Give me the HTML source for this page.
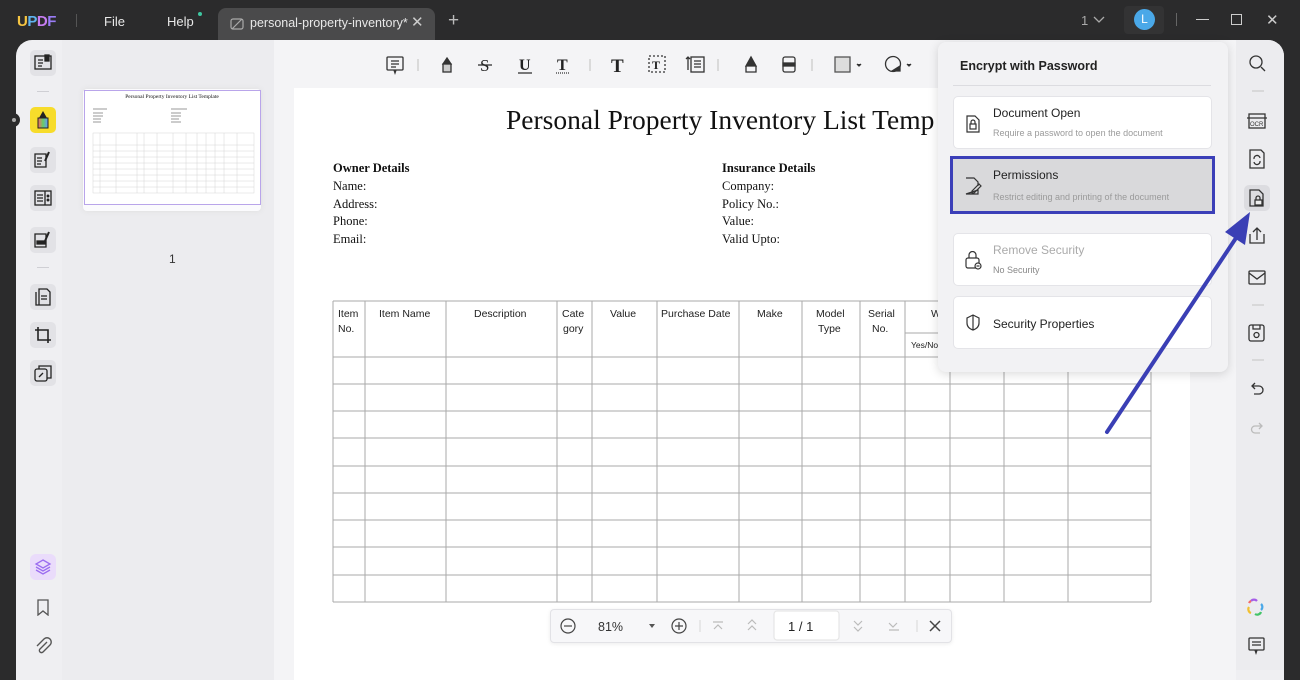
<!DOCTYPE html>
<html><head><meta charset="utf-8">
<style>
*{margin:0;padding:0;box-sizing:border-box}
body{width:1300px;height:670px;overflow:hidden;background:#2b2b2c;font-family:"Liberation Sans",sans-serif;position:relative}
.a{position:absolute}
.top{color:#e8e8e8;font-size:13px}
.ic{position:absolute;width:26px;height:26px;border-radius:5px;background:#e2e2e6}
.sep{position:absolute;width:12px;height:1px;background:#cfcfd4}
.card{position:absolute;left:953px;width:259px;background:#fff;border-radius:5px;border:1px solid #e4e4e8}
.ct{position:absolute;left:39px;font-size:12px;color:#222}
.cs{position:absolute;left:39px;font-size:9px;color:#9a9a9a}
.ser{font-family:"Liberation Serif",serif;color:#111}
</style></head><body>
<!-- title bar -->
<div class="a" style="left:17px;top:13px;font-weight:bold;font-size:15px;letter-spacing:-0.5px"><span style="color:#f5c542">U</span><span style="color:#5fb3f0">P</span><span style="color:#c77df2">D</span><span style="color:#9a7cf6">F</span></div>
<div class="a" style="left:76px;top:14px;width:1px;height:13px;background:#555"></div>
<div class="a top" style="left:104px;top:14px">File</div>
<div class="a top" style="left:167px;top:14px">Help</div>
<div class="a" style="left:198px;top:12px;width:4px;height:4px;border-radius:50%;background:#3ec6a0"></div>
<div class="a" style="left:218px;top:8px;width:217px;height:34px;background:#4a4a4b;border-radius:8px 8px 0 0"></div>
<svg class="a" style="left:229px;top:16px" width="16" height="16" viewBox="0 0 16 16" fill="none" stroke="#aaa" stroke-width="1.2"><rect x="2" y="3" width="12" height="10" rx="2"/><path d="M3 13 L13 3"/></svg>
<div class="a top" style="left:250px;top:16px;font-size:12.5px">personal-property-inventory*</div>
<div class="a top" style="left:411px;top:13px;font-size:15px;color:#ccc">✕</div>
<div class="a top" style="left:448px;top:10px;font-size:19px;color:#bbb">+</div>
<div class="a top" style="left:1081px;top:13px;color:#aaa">1</div>
<svg class="a" style="left:1093px;top:15px" width="12" height="10"><path d="M1 2 L6 7 L11 2" stroke="#aaa" fill="none" stroke-width="1.3"/></svg>
<div class="a" style="left:1124px;top:6px;width:40px;height:28px;background:#333334;border-radius:4px"></div>
<div class="a" style="left:1134px;top:9px;width:21px;height:21px;border-radius:50%;background:#4aa8e8;color:#fff;font-size:12px;text-align:center;line-height:21px">L</div>
<div class="a" style="left:1176px;top:13px;width:1px;height:13px;background:#666"></div>
<div class="a" style="left:1196px;top:19px;width:13px;height:1px;background:#ccc"></div>
<div class="a" style="left:1231px;top:14px;width:11px;height:11px;border:1.2px solid #ccc"></div>
<div class="a top" style="left:1266px;top:11px;font-size:15px;color:#ccc">✕</div>

<!-- main -->
<div class="a" style="left:16px;top:40px;width:1268px;height:640px;background:#efeff2;border-radius:16px 16px 0 0;overflow:hidden">
  <div class="a" style="left:46px;top:0;width:212px;height:640px;background:#ececef"></div>
  <div class="a" style="left:258px;top:0;width:962px;height:640px;background:#f4f4f6"></div>
  <div class="a" style="left:278px;top:48px;width:896px;height:600px;background:#fff"></div>
</div>
<div class="a" style="left:8px;top:113px;width:12px;height:14px;background:#2b2b2c;border-radius:0 8px 8px 0"></div>
<div class="a" style="left:12px;top:118px;width:4px;height:4px;border-radius:50%;background:#aaa"></div>

<!-- left icons -->
<div class="ic" style="left:30px;top:50px"></div>
<svg class="a" style="left:34px;top:54px" width="18" height="18" fill="none" stroke="#222" stroke-width="1.3"><rect x="1" y="2" width="16" height="13"/><path d="M4 6h5M4 9h5M4 12h4"/><rect x="11" y="1" width="4" height="6" fill="#222"/></svg>
<div class="sep" style="left:37px;top:91px"></div>
<div class="ic" style="left:30px;top:107px;background:#f7dc2b"></div>
<svg class="a" style="left:33px;top:109px" width="20" height="22"><path d="M10 2 L14 9 L6 9 Z" fill="#222"/><rect x="5" y="9" width="10" height="10" fill="url(#rb)" stroke="#222"/><defs><linearGradient id="rb" x1="0" x2="1"><stop offset="0" stop-color="#f66"/><stop offset=".5" stop-color="#6c6"/><stop offset="1" stop-color="#69f"/></linearGradient></defs></svg>
<div class="ic" style="left:30px;top:147px"></div>
<svg class="a" style="left:34px;top:151px" width="18" height="18" fill="none" stroke="#222" stroke-width="1.3"><path d="M1 3h11v13H1z"/><path d="M3 7h5M3 10h5M3 13h4"/><path d="M15 1 L11 10" stroke-width="2"/></svg>
<div class="ic" style="left:30px;top:185px"></div>
<svg class="a" style="left:34px;top:189px" width="18" height="18" fill="none" stroke="#222" stroke-width="1.3"><rect x="1" y="2" width="16" height="14"/><path d="M11 2v14M3 6h6M3 9h6M3 12h6"/><circle cx="14" cy="7" r=".8" fill="#222"/><circle cx="14" cy="11" r=".8" fill="#222"/></svg>
<div class="ic" style="left:30px;top:227px"></div>
<svg class="a" style="left:34px;top:231px" width="18" height="18" fill="none" stroke="#222" stroke-width="1.3"><path d="M1 3h11v13H1z"/><rect x="3" y="10" width="8" height="3" fill="#222"/><path d="M15 1 L11 10" stroke-width="2"/></svg>
<div class="sep" style="left:37px;top:267px"></div>
<div class="ic" style="left:30px;top:284px"></div>
<svg class="a" style="left:34px;top:288px" width="18" height="18" fill="none" stroke="#222" stroke-width="1.3"><path d="M5 1h8l3 3v13H5z M2 4v13h10"/><path d="M7 8h6M7 11h6"/></svg>
<div class="ic" style="left:30px;top:322px"></div>
<svg class="a" style="left:34px;top:326px" width="18" height="18" fill="none" stroke="#222" stroke-width="1.6"><path d="M4 1v13h13M1 4h13v13"/></svg>
<div class="ic" style="left:30px;top:360px"></div>
<svg class="a" style="left:34px;top:364px" width="18" height="18" fill="none" stroke="#222" stroke-width="1.3"><rect x="1" y="5" width="12" height="12" rx="2"/><path d="M5 5V2h12v12h-4"/><path d="M5 13l4-4"/></svg>
<div class="a" style="left:30px;top:554px;width:26px;height:26px;border-radius:6px;background:#eadcfb"></div>
<svg class="a" style="left:34px;top:558px" width="18" height="18" fill="none" stroke="#9b6cf0" stroke-width="1.3"><path d="M9 2 L16 6 L9 10 L2 6 Z"/><path d="M2 9 L9 13 L16 9M2 12 L9 16 L16 12"/></svg>
<svg class="a" style="left:36px;top:599px" width="14" height="17" fill="none" stroke="#555" stroke-width="1.3"><path d="M2 1h10v15l-5-4-5 4z"/></svg>
<svg class="a" style="left:35px;top:637px" width="17" height="18" fill="none" stroke="#555" stroke-width="1.4"><path d="M12 5 L5 12 a2 2 0 0 0 3 3 L15 8 a4 4 0 0 0-6-6 L2 9"/></svg>

<!-- thumbnail -->
<div class="a" style="left:83px;top:89px;width:178px;height:122px;background:#fbfbfd;border-radius:4px;box-shadow:0 0 6px #ddd"></div>
<div class="a" style="left:84px;top:90px;width:177px;height:115px;background:#fff;border:1.5px solid #b9a5ea">
 <div class="a ser" style="left:0;width:174px;top:3px;text-align:center;font-size:5.5px">Personal Property Inventory List Template</div>
 <svg class="a" style="left:6px;top:14px" width="165" height="95" stroke="#ccc" stroke-width=".4" fill="none">
  <path d="M2 4h14M2 8h10M2 11h10M2 14h8M2 17h8M80 4h16M80 8h10M80 11h10M80 14h8M80 17h10" stroke="#999" stroke-width="1"/>
  <rect x="2" y="28" width="161" height="60"/>
  <path d="M2 40h161M2 46h161M2 52h161M2 58h161M2 64h161M2 70h161M2 76h161M2 82h161M9 28v60M25 28v60M46 28v60M53 28v60M66 28v60M82 28v60M95 28v60M106 28v60M115 28v60M124 28v60M133 28v60M146 28v60"/>
 </svg>
</div>
<div class="a" style="left:169px;top:252px;font-size:12px;color:#333">1</div>

<!-- toolbar -->
<svg class="a" style="left:384px;top:54px" width="540" height="22" fill="none" stroke="#333" stroke-width="1.3">
 <rect x="3" y="3" width="16" height="13" rx="1"/><path d="M7 7h8M7 10h8M7 13h5M10 16l1 3 1-3"/>
 <path d="M34 5v12" stroke="#ccc"/>
 <path d="M63 4l4 6h-8z" fill="#333"/><rect x="59" y="10" width="8" height="8" fill="#ccc"/>
 <text x="96" y="17" font-family="Liberation Serif" font-size="17" fill="#222" stroke="none">S</text><path d="M94 11h14"/>
 <text x="135" y="16" font-family="Liberation Serif" font-weight="bold" font-size="16" fill="#222" stroke="none">U</text><path d="M134 19h14"/>
 <text x="173" y="16" font-family="Liberation Serif" font-weight="bold" font-size="16" fill="#222" stroke="none">T</text><path d="M172 19h14" stroke-dasharray="1 1"/>
 <path d="M206 5v12" stroke="#ccc"/>
 <text x="227" y="18" font-family="Liberation Serif" font-weight="bold" font-size="19" fill="#222" stroke="none">T</text>
 <rect x="265" y="2" width="16" height="16" stroke-dasharray="2 2"/><text x="268" y="15" font-family="Liberation Serif" font-weight="bold" font-size="12" fill="#222" stroke="none">T</text>
 <rect x="307" y="3" width="13" height="15"/><path d="M310 7h7M310 10h7M310 13h7M304 3v13M302 5l2-2 2 2"/>
 <path d="M334 5v12" stroke="#ccc"/>
 <path d="M367 3l5 9h-10z" fill="#333"/><path d="M362 12v6h10v-6"/>
 <rect x="399" y="3" width="12" height="15" rx="2"/><rect x="399" y="9" width="12" height="3" fill="#333"/>
 <path d="M428 5v12" stroke="#ccc"/>
 <rect x="451" y="3" width="15" height="15" fill="#ddd" stroke="#555"/><path d="M473 10l2 2 2-2" fill="#333"/>
 <circle cx="509" cy="10" r="7.5"/><path d="M508 17 l8-5 v5z" fill="#333"/><path d="M523 10l2 2 2-2" fill="#333"/>
</svg>

<!-- document -->
<div class="a ser" style="left:506px;top:104px;font-size:27.5px;white-space:nowrap">Personal Property Inventory List Temp</div>
<div class="a ser" style="left:333px;top:160px;font-size:12.5px;line-height:17.8px">
 <b>Owner Details</b><br>Name:<br>Address:<br>Phone:<br>Email:</div>
<div class="a ser" style="left:722px;top:160px;font-size:12.5px;line-height:17.8px">
 <b>Insurance Details</b><br>Company:<br>Policy No.:<br>Value:<br>Valid Upto:</div>
<svg class="a" style="left:0;top:0" width="1300" height="670" font-family="Liberation Sans" font-size="10.5" fill="#222">
 <g stroke="#aaa" stroke-width="1">
  <path d="M333 301H1151M333 357H1151M333 384H1151M333 411H1151M333 438H1151M333 466H1151M333 493H1151M333 520H1151M333 547H1151M333 575H1151M333 602H1151"/>
  <path d="M333 301V602M365 301V602M446 301V602M557 301V602M592 301V602M657 301V602M739 301V602M802 301V602M860 301V602M905 301V602M950 333V602M1004 301V602M1068 301V602M1151 301V602M905 333H1004"/>
 </g>
 <text x="338" y="317">Item</text><text x="338" y="332">No.</text>
 <text x="379" y="317">Item Name</text>
 <text x="474" y="317">Description</text>
 <text x="562" y="317">Cate</text><text x="563" y="332">gory</text>
 <text x="610" y="317">Value</text>
 <text x="661" y="317">Purchase Date</text>
 <text x="757" y="317">Make</text>
 <text x="816" y="317">Model</text><text x="818" y="332">Type</text>
 <text x="868" y="317">Serial</text><text x="872" y="332">No.</text>
 <text x="931" y="317">W</text>
 <text x="911" y="348" font-size="8.5">Yes/No</text>
</svg>

<!-- zoom bar -->
<div class="a" style="left:550px;top:609px;width:402px;height:34px;background:#f7f7f9;border:1px solid #e2e2e6;border-radius:4px;box-shadow:0 1px 4px rgba(0,0,0,.08)"></div>
<svg class="a" style="left:550px;top:609px" width="402" height="34" fill="none" stroke="#444" stroke-width="1.2">
 <circle cx="18" cy="17" r="7"/><path d="M14 17h8"/>
 <text x="48" y="22" font-family="Liberation Sans" font-size="12.5" fill="#333" stroke="none">81%</text>
 <path d="M99 15l3 4 3-4z" fill="#555" stroke="none"/>
 <circle cx="129" cy="17" r="7"/><path d="M125 17h8M129 13v8"/>
 <path d="M150 11v12" stroke="#ddd"/>
 <path d="M163 13h10M164 20l4-4 4 4M198 15l4-4 4 4M198 21l4-4 4 4" stroke="#bbb"/>
 <rect x="224" y="2" width="65" height="29" rx="3" fill="#fff" stroke="#e6e6e6"/>
 <text x="238" y="22" font-family="Liberation Sans" font-size="13" fill="#222" stroke="none">1 / 1</text>
 <path d="M304 12l4 4 4-4M304 18l4 4 4-4M339 14l4 4 4-4M339 21h10" stroke="#bbb"/>
 <path d="M367 11v12" stroke="#ddd"/>
 <path d="M380 12l10 10M390 12l-10 10" stroke-width="1.5"/>
</svg>

<!-- right column -->
<div class="a" style="left:1236px;top:40px;width:48px;height:630px;background:#ececef;border-radius:0 16px 0 0"></div>
<svg class="a" style="left:1236px;top:40px" width="48" height="630" fill="none" stroke="#333" stroke-width="1.3">
 <circle cx="20" cy="22" r="6"/><path d="M25 27l4 4"/>
 <path d="M16 51h12M16 265h12M16 320h12" stroke="#ccc"/>
 <rect x="13" y="74" width="16" height="14"/><path d="M11 78h20"/><text x="14" y="86" font-size="6" font-family="Liberation Sans" fill="#333" stroke="none">OCR</text>
 <path d="M14 110h11l3 3v15H14z"/><path d="M18 119a3 3 0 0 1 6-1M24 121a3 3 0 0 1-6 1"/>
 <rect x="8" y="145" width="26" height="26" rx="5" fill="#dcdce0" stroke="none"/>
 <path d="M14 150h9l4 4v12H14z"/><rect x="19" y="160" width="7" height="5" fill="#eee"/><path d="M20 160v-2a2 2 0 0 1 4 0v2"/>
 <path d="M14 194v9h14v-9M21 188v12M17 192l4-4 4 4"/>
 <rect x="13" y="231" width="16" height="13" rx="1"/><path d="M13 233l8 6 8-6"/>
 <rect x="13" y="285" width="15" height="16" rx="2"/><circle cx="20.5" cy="295" r="2.5"/><path d="M17 285v4h7v-4"/>
 <path d="M17 346h6a4 4 0 0 1 0 8h-5M19 343l-3 3 3 3"/>
 <path d="M25 386h-6a3 3 0 0 0 0 7h5M23 383l3 3-3 3" stroke="#bbb"/>
 <g stroke-width="2.2"><path d="M15 561a4 4 0 0 1 6 0" stroke="#a55de8"/><path d="M25 564a4 4 0 0 1 0 6" stroke="#4aa8e8"/><path d="M25 572a4 4 0 0 1-6 2" stroke="#44c468"/><path d="M15 573a4 4 0 0 1-2-6" stroke="#f2c031"/><path d="M13 563a4 4 0 0 1 2-2" stroke="#f26b6b"/></g>
 <rect x="13" y="598" width="15" height="12" rx="1"/><path d="M16 602h9M16 605h9M19 610l1 3 1-3"/>
</svg>

<!-- popup -->
<div class="a" style="left:938px;top:42px;width:290px;height:330px;background:#f2f2f4;border-radius:8px;box-shadow:0 2px 10px rgba(0,0,0,.15)"></div>
<div class="a" style="left:960px;top:59px;font-size:12.5px;font-weight:bold;color:#222">Encrypt with Password</div>
<div class="a" style="left:953px;top:85px;width:258px;height:1px;background:#dcdce0"></div>
<div class="card" style="top:96px;height:53px"><div class="ct" style="top:9px">Document Open</div><div class="cs" style="top:31px">Require a password to open the document</div>
 <svg class="a" style="left:10px;top:18px" width="18" height="18" fill="none" stroke="#333" stroke-width="1.2"><path d="M3 1h8l4 4v12H3z"/><rect x="6" y="9" width="6" height="5"/><path d="M7 9V7a2 2 0 0 1 4 0v2"/></svg></div>
<div class="a" style="left:950px;top:156px;width:265px;height:58px;background:#d9d9db;border:3px solid #3b3fb8"></div>
<div class="a" style="left:993px;top:168px;font-size:12px;color:#222">Permissions</div>
<div class="a" style="left:993px;top:192px;font-size:9px;color:#9a9a9a">Restrict editing and printing of the document</div>
<svg class="a" style="left:963px;top:176px" width="20" height="20" fill="none" stroke="#333" stroke-width="1.2"><path d="M3 2h8l4 4v4M15 14v4H3z"/><path d="M9 15l7-7 2 2-7 7h-2z"/></svg>
<div class="card" style="top:233px;height:53px"><div class="ct" style="top:9px;color:#aaa">Remove Security</div><div class="cs" style="top:31px;color:#888">No Security</div>
 <svg class="a" style="left:10px;top:17px" width="20" height="20" fill="none" stroke="#333" stroke-width="1.2"><rect x="2" y="7" width="13" height="10" rx="2"/><path d="M5 7V4a3 3 0 0 1 7 0v3"/><circle cx="14" cy="15" r="3" fill="#fff"/><path d="M12.5 15h3"/></svg></div>
<div class="card" style="top:296px;height:53px"><div class="ct" style="top:20px">Security Properties</div>
 <svg class="a" style="left:11px;top:17px" width="16" height="18" fill="none" stroke="#333" stroke-width="1.2"><path d="M8 1l6 3v5c0 4-3 6-6 7-3-1-6-3-6-7V4z"/><path d="M8 1v15"/></svg></div>

<!-- arrow -->
<svg class="a" style="left:0;top:0" width="1300" height="670"><path d="M1107 432 L1238 235" stroke="#3a3fb5" stroke-width="4" stroke-linecap="round"/><path d="M1250 212 L1225 232 L1245 245 Z" fill="#3a3fb5"/></svg>
</body></html>
